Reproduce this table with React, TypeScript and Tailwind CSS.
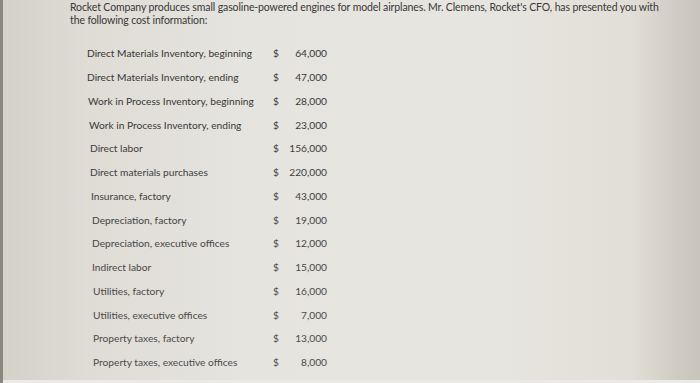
const rows = [
  { label: "Direct Materials Inventory, beginning", value: "64,000", pad: "pl-0", color: "text-[#363636]" },
  { label: "Direct Materials Inventory, ending", value: "47,000", pad: "pl-0", color: "text-[#383838]" },
  { label: "Work in Process Inventory, beginning", value: "28,000", pad: "pl-[1px]", color: "text-[#383838]" },
  { label: "Work in Process Inventory, ending", value: "23,000", pad: "pl-[2px]", color: "text-[#3a3a3a]" },
  { label: "Direct labor", value: "156,000", pad: "pl-[3px]", color: "text-[#3c3c3c]" },
  { label: "Direct materials purchases", value: "220,000", pad: "pl-[3px]", color: "text-[#3e3e3e]" },
  { label: "Insurance, factory", value: "43,000", pad: "pl-[4px]", color: "text-[#414141]" },
  { label: "Depreciation, factory", value: "19,000", pad: "pl-[5px]", color: "text-[#444]" },
  { label: "Depreciation, executive offices", value: "12,000", pad: "pl-[5px]", color: "text-[#464646]" },
  { label: "Indirect labor", value: "15,000", pad: "pl-[5px]", color: "text-[#484848]" },
  { label: "Utilities, factory", value: "16,000", pad: "pl-[6px]", color: "text-[#4a4a4a]" },
  { label: "Utilities, executive offices", value: "7,000", pad: "pl-[6px]", color: "text-[#4a4a4a]" },
  { label: "Property taxes, factory", value: "13,000", pad: "pl-[6px]", color: "text-[#4c4c4c]" },
  { label: "Property taxes, executive offices", value: "8,000", pad: "pl-[6px]", color: "text-[#4c4c4c]" },
];

export default function App() {
  return (
    <div className="relative w-[700px] h-[383px] overflow-hidden border-l-[3px] border-[#8a877f] bg-[linear-gradient(90deg,#d4d1c9_0%,#dedcd5_12%,#e6e4de_35%,#e7e5df_70%,#e2dfd8_90%,#cfcbc2_97%,#c9c5bc_100%)] font-['Lato','Open_Sans',sans-serif]">
      <div className="pl-[67px] pr-[30px] pt-[1px] text-[10.5px] leading-[13px] text-[#383838] tracking-[-0.12px]">
        <p>
          Rocket Company produces small gasoline-powered engines for model airplanes. Mr. Clemens, Rocket's CFO, has presented you with
        </p>
        <p>the following cost information:</p>
      </div>

      <div className="mt-[15px] ml-[84px] w-[240px]">
        {rows.map((r) => (
          <div
            key={r.label}
            className={`flex items-center h-[23.77px] text-[10.2px] ${r.color}`}
          >
            <span className={`flex-1 ${r.pad}`}>{r.label}</span>
            <span className="w-[10px]">$</span>
            <span className="w-[44px] text-right">{r.value}</span>
          </div>
        ))}
      </div>

      <div className="absolute left-0 right-0 bottom-0 h-[3px] bg-[#ebeae7]" />
    </div>
  );
}
